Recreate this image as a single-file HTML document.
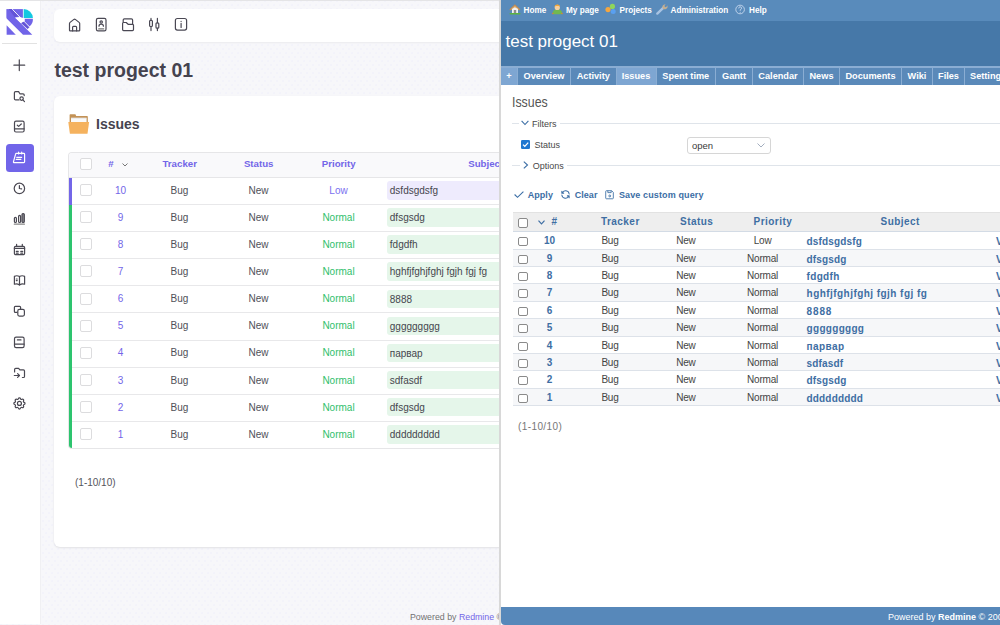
<!DOCTYPE html>
<html><head><meta charset="utf-8">
<style>
*{box-sizing:border-box;margin:0;padding:0}
html,body{width:1000px;height:625px;overflow:hidden;font-family:"Liberation Sans",sans-serif;background:#fff}
.ic{position:absolute;overflow:visible}
#L{position:absolute;left:0;top:0;width:499px;height:625px;background-color:#f7f7fa;background-image:radial-gradient(circle at 1px 1px,#f2f2fa 0.6px,transparent 1px),radial-gradient(circle at 4px 5px,#f2f2fa 0.6px,transparent 1px);background-size:6px 8px;overflow:hidden}
#sep{position:absolute;left:499px;top:0;width:2px;height:625px;background:#d8d8d8}
#R{position:absolute;left:501px;top:0;width:499px;height:625px;background:#fff;overflow:hidden}
/* left */
#topline{position:absolute;left:0;top:0;width:499px;height:1px;background:#e4e4e6}
#side{position:absolute;left:0;top:0;width:40px;height:624px;background:#fff;box-shadow:1px 0 0 #f0f0f3}
#side .sep{position:absolute;left:1.5px;top:43px;width:35.5px;height:1px;background:#e2e2e2}
#sideact{position:absolute;left:5.5px;top:144px;width:28px;height:28px;background:#7165e9;border-radius:3.5px}
#tb{position:absolute;left:54px;top:9px;width:470px;height:33px;background:#fff;border-radius:6px;box-shadow:0 1px 2px rgba(0,0,0,.05)}
#ltitle{position:absolute;left:54.4px;top:59px;font-size:19.5px;font-weight:bold;color:#45434f;white-space:nowrap}
#card{position:absolute;left:54px;top:96px;width:470px;height:451px;background:#fff;border-radius:6px;box-shadow:0 1px 2px rgba(0,0,0,.09)}
#lh2{position:absolute;left:96px;top:116px;font-size:14px;font-weight:bold;color:#45434f}
#ltab{position:absolute;left:68px;top:152px;width:460px;height:297px;border:1px solid #e6e6e8;border-right:none;border-radius:4px 0 0 4px;overflow:hidden;background:#fff}
#ltab .hr{position:absolute;left:0;top:0;right:0;height:24.5px;background:#f9f9fb;border-bottom:1px solid #e6e6e8}
#ltab .lr{position:absolute;left:-1px;right:0;height:27.1px;border-bottom:1px solid #e8e8ea}
#ltab .lr:last-child{border-bottom:none}
#ltab .bar{position:absolute;left:-1px;top:-0.5px;bottom:-1.5px;width:5.4px}
#ltab .cb{position:absolute;left:12px;top:6.2px;width:12px;height:12px;border:1px solid #dcdcde;border-radius:2px;background:#fff}
#ltab .hr .cb{left:11px;top:5px}
#ltab .c{position:absolute;top:6.9px;font-size:10px;line-height:12px;color:#505058;white-space:nowrap;transform:translateX(-50%);margin-left:0.5px}
#ltab .hr .c{top:5px;margin-left:-0.3px;font-weight:bold;color:#7366e8;font-size:9.7px}
#ltab .subj{position:absolute;left:318.5px;top:3.2px;width:200px;height:18.5px;border-radius:3px;font-size:10px;color:#46464e;padding-left:3.3px;line-height:19.6px;white-space:nowrap}
#lpag{position:absolute;left:75px;top:477px;font-size:10px;color:#55555c}
#lfoot{position:absolute;left:410px;top:612px;font-size:8.8px;color:#727272;white-space:nowrap}
#lfoot b{font-weight:normal;color:#7366e8}
/* right */
#rtop{position:absolute;left:0;top:0;width:499px;height:21px;background:#598bbb}
#rhead{position:absolute;left:0;top:21px;width:499px;height:46px;background:#4678a8}
#rtitle{position:absolute;left:4.5px;top:31.5px;font-size:17px;color:#fff;white-space:nowrap}
#rtabs{position:absolute;left:0;top:66px;width:499px;height:19px;background:#8aadd3}
.tab{position:absolute;top:1.5px;height:17.5px;background:#5a89b9;color:#fff;font-weight:bold;font-size:9.2px;line-height:17.8px;text-align:center;white-space:nowrap}
.tab.sel{background:#7ea6d2}
.mm{position:absolute;top:5.5px;font-size:8.2px;font-weight:bold;color:#fff;white-space:nowrap;line-height:10px}
#rh2{position:absolute;left:11.3px;top:93.5px;font-size:14.2px;color:#555;white-space:nowrap;transform:scaleX(0.87);transform-origin:0 0}
.leg{position:absolute;left:11px;height:1px;background:#dfe4ea;width:490px}
.legt{position:absolute;font-size:9px;color:#484848;background:#fff;white-space:nowrap;line-height:10px}
.rbtn{position:absolute;top:189.5px;font-size:9px;font-weight:bold;color:#3b6ea5;white-space:nowrap;letter-spacing:0.05px;line-height:10px}
#rtab{position:absolute;left:11.6px;top:212px;width:500px;height:194px}
#rtab .hd{position:absolute;left:0;top:0;right:0;height:20px;background:#eeeeee;border-top:1px solid #e2e2e2;border-bottom:1px solid #d3dbe5}
#rtab .hd .t{position:absolute;top:2.6px;font-size:10px;font-weight:bold;color:#3e6ea3;white-space:nowrap;letter-spacing:0.45px;line-height:12px}
#rtab .rr{position:absolute;left:0;right:0;border-bottom:1px solid #dde2e9;background:#fff}
#rtab .rr.odd{background:#f6f7f9}
.rcb{position:absolute;left:5.8px;top:5px;width:9.2px;height:9.2px;border:1px solid #8a8a8a;border-radius:2px;background:#fff}
.rid{position:absolute;left:25px;width:24px;text-align:center;top:2.9px;font-size:10px;font-weight:bold;color:#3e6ea3;line-height:11px}
.rc{position:absolute;top:2.6px;font-size:10px;letter-spacing:-0.2px;color:#444;white-space:nowrap;line-height:11px}
.rp{left:222px;width:56px;text-align:center}
.rs{position:absolute;left:294px;top:3.5px;font-size:10px;font-weight:bold;color:#3e6ea3;white-space:nowrap;line-height:11px;letter-spacing:0.15px}
.rv{position:absolute;left:483.4px;top:3.5px;font-size:10px;font-weight:bold;color:#3e6ea3;line-height:11px}
#rpag{position:absolute;left:17px;top:420.5px;font-size:10px;color:#777;white-space:nowrap;letter-spacing:0.4px}
#rfoot{position:absolute;left:0;top:607px;width:499px;height:18px;border-bottom-left-radius:4px;background:#5788ba;color:#fff;font-size:9px;line-height:18px;white-space:nowrap}
#rfoot span{position:absolute;left:387px;top:0.5px}
</style></head>
<body>
<div id="L">
  <div id="side">
    <svg class="ic" style="left:4px;top:6px;width:32px;height:32px" viewBox="0 0 32 32">
      <path d="M2.6 3.1H18.9V11.8H2.6Z" fill="#7164e8"/>
      <path d="M2.6 3.1L2.6 12.6L19 28.7H28.3L12 12.6Z" fill="#7164e8"/>
      <path d="M2.6 19.3V28.7H11.8Z" fill="#7164e8"/>
      <path d="M19.7 3.1A9.2 9.2 0 0 1 28.9 12.1H19.7Z" fill="#13c9e1"/>
      <path d="M20.5 12.8H28.9A9 9 0 0 1 25.3 20.6L20.5 16Z" fill="#7164e8"/>
      <path d="M4.6 3.1H8.2L14.8 9.6L11 11.5Z" fill="#6354d6"/>
      <path d="M16.9 16.9L20.5 14.9L25.6 21L23.6 23.1Z" fill="#6354d6"/>
      <path d="M11 11.6L15.9 11L20.5 12.8V14.9L16.9 16.9Z" fill="#fff"/>
      <path d="M8.2 3.1L25.6 21" stroke="#fff" stroke-width="0.9"/>
    </svg>
    <div class="sep"></div>
    <svg class="ic" style="left:0;top:0;width:40px;height:625px" viewBox="0 0 40 625" fill="none" stroke="#4a4852" stroke-width="1.2" stroke-linecap="round" stroke-linejoin="round">
<path d="M19.3 59.8V70.6M13.9 65.2H24.7"/>
<path d="M19 99.9H15.6Q14.4 99.9 14.4 98.7V92.8Q14.4 91.6 15.6 91.6H18.6L19.9 93.8H23Q24.2 93.8 24.2 95V95.6"/>
<circle cx="21.6" cy="98.6" r="1.7"/><path d="M22.9 99.9L24.5 101.6"/>
<rect x="14.5" y="121.2" width="9.6" height="10.8" rx="1.5"/><path d="M14.5 128.8H24.1"/><path d="M17.3 125.2L18.7 126.4L21.3 124"/>
<circle cx="19.4" cy="188.4" r="5.2"/><path d="M19.4 185.6V188.5L21.6 188.9"/>
<rect x="14.4" y="217.3" width="2" height="5.2" rx="1"/><rect x="18.6" y="215.4" width="2" height="7.1" rx="1"/><rect x="22" y="213.6" width="2.3" height="8.9" rx="1" fill="#8a8a90"/><path d="M14.3 224.2H24.4" stroke="#888"/>
<rect x="14.4" y="246.3" width="10.2" height="8.3" rx="1.2"/><path d="M16.6 244.3V246.3M22.3 244.3V246.3M14.4 248.4H24.6M16.3 251.4H18.2M20.8 251.4H22.7M16.3 253.2H18.2M20.8 253.2H22.7" />
<path d="M14.4 276.4Q17 275 19.5 276.6Q22 275 24.6 276.4V284.2Q22 283.2 19.5 285Q17 283.2 14.4 284.2Z"/><path d="M19.5 276.6V285M16.3 279H17.2M16.3 280.6H17.2"/>
<path d="M17 312.3H15.3Q14.4 312.3 14.4 311.4V307.2Q14.4 306.3 15.3 306.3H19.6Q20.6 306.3 20.6 307.2V309.2"/><rect x="17.8" y="309.4" width="6.6" height="6.7" rx="1.5"/>
<rect x="14.5" y="337.2" width="9.6" height="10.5" rx="1.6"/><path d="M14.5 344.2H24.1M17.4 339.9H21"/>
<path d="M14.6 372V369.4Q14.6 368.3 15.7 368.3H18.6L19.9 369.9H23.4Q24.5 369.9 24.5 371V376.4Q24.5 377.5 23.4 377.5H22.4"/><path d="M14.3 375.5H19.4M17.6 373.6L19.5 375.5L17.6 377.4"/>
<g transform="translate(19.43 403.45) scale(0.62) translate(-12 -12)" stroke-width="1.95"><path d="M10.325 4.317c.426-1.756 2.924-1.756 3.35 0a1.724 1.724 0 0 0 2.573 1.066c1.543-.94 3.31.826 2.37 2.37a1.724 1.724 0 0 0 1.065 2.572c1.756.426 1.756 2.924 0 3.35a1.724 1.724 0 0 0-1.066 2.573c.94 1.543-.826 3.31-2.37 2.37a1.724 1.724 0 0 0-2.572 1.065c-.426 1.756-2.924 1.756-3.35 0a1.724 1.724 0 0 0-2.573-1.066c-1.543.94-3.31-.826-2.37-2.37a1.724 1.724 0 0 0-1.065-2.572c-1.756-.426-1.756-2.924 0-3.35a1.724 1.724 0 0 0 1.066-2.573c-.94-1.543.826-3.31 2.37-2.37c1 .608 2.296.07 2.572-1.065z"/><circle cx="12" cy="12" r="3.2"/></g>
</svg>
    <div id="sideact"></div>
    <svg class="ic" style="left:0;top:0;width:40px;height:200px" viewBox="0 0 40 200" fill="none" stroke="#fff" stroke-width="1.2" stroke-linecap="round" stroke-linejoin="round">
<path d="M16.4 153.4H23.8Q24.6 153.4 24.6 154.2V161.8Q24.6 162.6 23.8 162.6H14.2Q13.2 162.6 13.5 161.6L15.6 154.2Q15.8 153.4 16.4 153.4Z"/>
<path d="M18.6 152.2V154M21.7 152.2V154M16.8 157.4H21.6M16.3 159.4H20.8"/>
</svg>
  </div>
  <div id="topline"></div>
  <div id="tb"></div>
  <svg class="ic" style="left:0;top:0;width:200px;height:40px" viewBox="0 0 200 40" fill="none" stroke="#4a4854" stroke-width="1.2" stroke-linecap="round" stroke-linejoin="round">
    <path d="M69.5 30.2V23.6Q69.5 22.9 70.1 22.4L73.9 19.4Q74.6 18.9 75.3 19.4L79.1 22.4Q79.7 22.9 79.7 23.6V30.2Q79.7 30.9 79 30.9H70.2Q69.5 30.9 69.5 30.2Z"/>
    <path d="M72.6 30.9V27.2Q72.6 26.3 73.5 26.3H75.7Q76.6 26.3 76.6 27.2V30.9"/>
    <rect x="96.4" y="18.4" width="9.6" height="12.4" rx="1.6"/>
    <circle cx="101.2" cy="22" r="1.2"/>
    <path d="M99 26.2Q99 24.2 101.2 24.2Q103.4 24.2 103.4 26.2"/>
    <path d="M98.8 28.9H103.6" stroke-width="1.4" stroke="#777"/>
    <path d="M123.2 22.2V20.1Q123.2 18.9 124.4 18.9H131.4Q132.6 18.9 132.6 20.1V24.2"/>
    <path d="M122.6 29.6V23.4Q122.6 22.5 123.5 22.5H126.2L128.1 24.3H132.6Q133.5 24.3 133.5 25.2V29.6Q133.5 30.6 132.5 30.6H123.6Q122.6 30.6 122.6 29.6Z"/>
    <path d="M151 18.4V20.2M151 26.6V30.6M157.4 18.4V22.7M157.4 28.3V30.6"/>
    <rect x="149.6" y="20.3" width="2.8" height="6.2" rx="1"/>
    <rect x="156" y="22.8" width="2.8" height="5.4" rx="1"/>
    <rect x="175.4" y="18.5" width="11.2" height="11.6" rx="2"/>
    <path d="M181.1 21.4V21.5M181.1 23.4V27.4"/>
  </svg>
  <div id="ltitle">test progect 01</div>
  <div id="card"></div>
  <svg class="ic" style="left:60px;top:110px;width:35px;height:30px" viewBox="60 110 35 30">
    <path d="M69.6 115Q69.6 114.3 70.3 114.3H75.4L76.2 116H87.1Q87.8 116 87.8 116.7V122.2H69.6Z" fill="#c39256"/>
    <rect x="71" y="117.8" width="15.6" height="4.4" fill="#fafafa"/>
    <path d="M71 118.2H86.6" stroke="#d8d8d8" stroke-width="0.6"/>
    <path d="M68.3 121.9H89.1L87.5 133.8H69.9Z" fill="#f5b25e"/>
  </svg>
  <div id="lh2">Issues</div>
  <div id="ltab">
    <div class="hr">
      <div class="cb"></div>
      <div class="c" style="left:42.3px">#</div>
      <svg class="ic" style="left:52.6px;top:9.8px;width:6px;height:4px" viewBox="0 0 6 4" fill="none" stroke="#666" stroke-width="0.9"><path d="M0.5 0.5L3 3L5.5 0.5"/></svg>
      <div class="c" style="left:111px">Tracker</div>
      <div class="c" style="left:190px">Status</div>
      <div class="c" style="left:270px">Priority</div>
      <div class="c" style="left:417px">Subject</div>
    </div>
    <div class="lr" style="top:25.00px"><div class="bar" style="background:#7366e8"></div><div class="cb"></div><div class="c" style="left:52px;color:#7366e8">10</div><div class="c" style="left:111px">Bug</div><div class="c" style="left:190px">New</div><div class="c" style="left:270px;color:#7a6ff0">Low</div><div class="subj" style="background:#eeebfd">dsfdsgdsfg</div></div><div class="lr" style="top:52.10px"><div class="bar" style="background:#2dc46e"></div><div class="cb"></div><div class="c" style="left:52px;color:#7366e8">9</div><div class="c" style="left:111px">Bug</div><div class="c" style="left:190px">New</div><div class="c" style="left:270px;color:#2fc06b">Normal</div><div class="subj" style="background:#e5f6ea">dfsgsdg</div></div><div class="lr" style="top:79.20px"><div class="bar" style="background:#2dc46e"></div><div class="cb"></div><div class="c" style="left:52px;color:#7366e8">8</div><div class="c" style="left:111px">Bug</div><div class="c" style="left:190px">New</div><div class="c" style="left:270px;color:#2fc06b">Normal</div><div class="subj" style="background:#e5f6ea">fdgdfh</div></div><div class="lr" style="top:106.30px"><div class="bar" style="background:#2dc46e"></div><div class="cb"></div><div class="c" style="left:52px;color:#7366e8">7</div><div class="c" style="left:111px">Bug</div><div class="c" style="left:190px">New</div><div class="c" style="left:270px;color:#2fc06b">Normal</div><div class="subj" style="background:#e5f6ea">hghfjfghjfghj fgjh fgj fg</div></div><div class="lr" style="top:133.40px"><div class="bar" style="background:#2dc46e"></div><div class="cb"></div><div class="c" style="left:52px;color:#7366e8">6</div><div class="c" style="left:111px">Bug</div><div class="c" style="left:190px">New</div><div class="c" style="left:270px;color:#2fc06b">Normal</div><div class="subj" style="background:#e5f6ea">8888</div></div><div class="lr" style="top:160.50px"><div class="bar" style="background:#2dc46e"></div><div class="cb"></div><div class="c" style="left:52px;color:#7366e8">5</div><div class="c" style="left:111px">Bug</div><div class="c" style="left:190px">New</div><div class="c" style="left:270px;color:#2fc06b">Normal</div><div class="subj" style="background:#e5f6ea">ggggggggg</div></div><div class="lr" style="top:187.60px"><div class="bar" style="background:#2dc46e"></div><div class="cb"></div><div class="c" style="left:52px;color:#7366e8">4</div><div class="c" style="left:111px">Bug</div><div class="c" style="left:190px">New</div><div class="c" style="left:270px;color:#2fc06b">Normal</div><div class="subj" style="background:#e5f6ea">парвар</div></div><div class="lr" style="top:214.70px"><div class="bar" style="background:#2dc46e"></div><div class="cb"></div><div class="c" style="left:52px;color:#7366e8">3</div><div class="c" style="left:111px">Bug</div><div class="c" style="left:190px">New</div><div class="c" style="left:270px;color:#2fc06b">Normal</div><div class="subj" style="background:#e5f6ea">sdfasdf</div></div><div class="lr" style="top:241.80px"><div class="bar" style="background:#2dc46e"></div><div class="cb"></div><div class="c" style="left:52px;color:#7366e8">2</div><div class="c" style="left:111px">Bug</div><div class="c" style="left:190px">New</div><div class="c" style="left:270px;color:#2fc06b">Normal</div><div class="subj" style="background:#e5f6ea">dfsgsdg</div></div><div class="lr" style="top:268.90px"><div class="bar" style="background:#2dc46e"></div><div class="cb"></div><div class="c" style="left:52px;color:#7366e8">1</div><div class="c" style="left:111px">Bug</div><div class="c" style="left:190px">New</div><div class="c" style="left:270px;color:#2fc06b">Normal</div><div class="subj" style="background:#e5f6ea">ddddddddd</div></div>
  </div>
  <div id="lpag">(1-10/10)</div>
  <div id="lfoot">Powered by <b>Redmine</b> ©</div>
</div>
<div id="sep"></div>
<div id="R">
  <div id="rtop"></div>
  <svg class="ic" style="left:0;top:0;width:260px;height:21px" viewBox="501 0 260 21">
    <path d="M509.3 9.6L514.9 4.3L520.5 9.6L519.3 10.6L514.9 6.6L510.5 10.6Z" fill="#c08a52"/>
    <path d="M510.5 9.4L514.9 5.4L519.3 9.4Z" fill="#d9a86c"/>
    <path d="M512 9L514.9 7.2L518 9V14H512Z" fill="#f2f2f2"/>
    <rect x="513.8" y="10" width="2.4" height="4" fill="#8c8c8c"/>
    <rect x="509.5" y="12.9" width="11" height="1.6" rx="0.8" fill="#5cb33f"/>
    <path d="M552.6 14.2Q552.4 9.2 557.4 9Q562.4 9.2 562.3 14.2Z" fill="#72b850"/>
    <circle cx="557.3" cy="7.4" r="2.6" fill="#f5d0a0"/>
    <path d="M554.6 7Q554.6 4.4 557.3 4.4Q560 4.4 560 7L558.8 6H555.8Z" fill="#f2a433"/>
    <circle cx="552.8" cy="13.5" r="0.8" fill="#e07c3a"/><circle cx="562" cy="13.5" r="0.8" fill="#e07c3a"/>
    <circle cx="612.4" cy="6.4" r="2.6" fill="#8fd65c"/>
    <circle cx="613.2" cy="11.6" r="2.5" fill="#5aa0f0"/>
    <circle cx="608" cy="9.6" r="2.6" fill="#f4a640"/>
    <path d="M657.3 13.6L663.5 7.6" stroke="#a9c3e2" stroke-width="2.4" stroke-linecap="round"/>
    <path d="M662.6 8.2Q661.8 5 664.4 4.4L665.6 4.3L664.4 6L665.2 7.2L666.8 6.6L667.2 5.2Q668.4 7.6 666 9Q664.6 9.6 663.6 9.2Z" fill="#c4ae90"/>
    <circle cx="740.1" cy="9.5" r="4.3" fill="none" stroke="#c6d8ee" stroke-width="0.9"/>
    <path d="M738.7 8.4Q738.7 6.8 740.1 6.8Q741.6 6.8 741.6 8.2Q741.6 9.2 740.2 9.8V10.8" fill="none" stroke="#c6d8ee" stroke-width="0.9"/>
    <circle cx="740.2" cy="12.2" r="0.5" fill="#c6d8ee"/>
  </svg>
  <div class="mm" style="left:22.5px">Home</div>
  <div class="mm" style="left:65px">My page</div>
  <div class="mm" style="left:118.5px">Projects</div>
  <div class="mm" style="left:169.5px">Administration</div>
  <div class="mm" style="left:248px">Help</div>
  <div id="rhead"></div>
  <div id="rtitle">test progect 01</div>
  <div id="rtabs"><div class="tab sel" style="left:0px;width:16px">+</div><div class="tab" style="left:17px;width:52px">Overview</div><div class="tab" style="left:70px;width:44.5px">Activity</div><div class="tab sel" style="left:115.5px;width:39.0px">Issues</div><div class="tab" style="left:155.5px;width:58.5px">Spent time</div><div class="tab" style="left:215px;width:36px">Gantt</div><div class="tab" style="left:252px;width:50px">Calendar</div><div class="tab" style="left:303px;width:35px">News</div><div class="tab" style="left:339px;width:61px">Documents</div><div class="tab" style="left:401px;width:30px">Wiki</div><div class="tab" style="left:432px;width:31px">Files</div><div class="tab" style="left:464px;width:76px;text-align:left;padding-left:5px">Settings</div></div>
  <div id="rh2">Issues</div>
  <div class="leg" style="top:123px"></div>
  <div class="legt" style="left:18px;top:118.8px;padding:0 3px 0 2px">
    <svg style="display:inline-block;width:8px;height:6px;vertical-align:1px;margin-right:3px" viewBox="0 0 8 6" fill="none" stroke="#3b6ea5" stroke-width="1.1"><path d="M0.6 0.8L4 4.5L7.4 0.8"/></svg>Filters</div>
  <svg class="ic" style="left:20px;top:140px;width:9px;height:9px" viewBox="0 0 9 9">
    <rect x="0" y="0" width="9" height="9" rx="1.3" fill="#1f77d0"/>
    <path d="M2 4.6L3.8 6.4L7.2 2.6" fill="none" stroke="#fff" stroke-width="1.3"/>
  </svg>
  <div class="legt" style="left:33.5px;top:140px">Status</div>
  <div style="position:absolute;left:185.5px;top:136.6px;width:84px;height:17px;border:1px solid #d6d6d6;border-radius:3px;background:#fff"></div>
  <div class="legt" style="left:191px;top:141px;font-size:9.5px;color:#3a3a3a;background:none">open</div>
  <svg class="ic" style="left:255.6px;top:142.5px;width:8px;height:5px" viewBox="0 0 8 5" fill="none" stroke="#a3aebf" stroke-width="1"><path d="M0.5 0.5L4 4L7.5 0.5"/></svg>
  <div class="leg" style="top:165px"></div>
  <div class="legt" style="left:18.8px;top:160.8px;padding:0 3px 0 3px">
    <svg style="display:inline-block;width:6px;height:8px;vertical-align:0px;margin-right:4px" viewBox="0 0 6 8" fill="none" stroke="#3b6ea5" stroke-width="1.1"><path d="M0.8 0.6L4.5 4L0.8 7.4"/></svg>Options</div>
  <svg class="ic" style="left:12.5px;top:190.5px;width:10px;height:7px" viewBox="0 0 10 7" fill="none" stroke="#3b6ea5" stroke-width="1.1"><path d="M0.6 3.5L3.5 6.3L9.4 0.6"/></svg>
  <div class="rbtn" style="left:26.7px">Apply</div>
  <svg class="ic" style="left:59px;top:188.5px;width:11px;height:11px" viewBox="0 0 24 24" fill="none" stroke="#3b6ea5" stroke-width="2.2" stroke-linecap="round" stroke-linejoin="round"><path d="M20 11A8.1 8.1 0 0 0 4.5 9M4 5v4h4"/><path d="M4 13a8.1 8.1 0 0 0 15.5 2m.5 4v-4h-4"/></svg>
  <div class="rbtn" style="left:73.7px">Clear</div>
  <svg class="ic" style="left:104.2px;top:189.5px;width:9.5px;height:9.5px" viewBox="0 0 20 20" fill="none" stroke="#3b6ea5" stroke-width="1.8" stroke-linejoin="round"><path d="M1.5 3a1.5 1.5 0 0 1 1.5-1.5h11l3.5 3.5v12a1.5 1.5 0 0 1-1.5 1.5H3a1.5 1.5 0 0 1-1.5-1.5z"/><path d="M6 1.5v4h7v-4"/><circle cx="10" cy="12.5" r="2"/></svg>
  <div class="rbtn" style="left:118px;letter-spacing:0.12px">Save custom query</div>
  <div id="rtab">
    <div class="hd">
      <div class="rcb" style="top:5.4px"></div>
      <svg class="ic" style="left:25.5px;top:7px;width:7px;height:5px" viewBox="0 0 7 5" fill="none" stroke="#3e6ea3" stroke-width="1.2"><path d="M0.5 0.7L3.5 3.8L6.5 0.7"/></svg>
      <div class="t" style="left:39px">#</div>
      <div class="t" style="left:88.4px">Tracker</div>
      <div class="t" style="left:167.5px">Status</div>
      <div class="t" style="left:241px">Priority</div>
      <div class="t" style="left:368px">Subject</div>
    </div>
    <div class="rr" style="top:20px;height:18px"><div class="rcb"></div><div class="rid">10</div><div class="rc" style="left:88.79999999999995px">Bug</div><div class="rc" style="left:163.60000000000002px">New</div><div class="rc rp">Low</div><div class="rs" style="letter-spacing:0.15px">dsfdsgdsfg</div><div class="rv">V</div></div><div class="rr odd" style="top:38px;height:17px"><div class="rcb"></div><div class="rid">9</div><div class="rc" style="left:88.79999999999995px">Bug</div><div class="rc" style="left:163.60000000000002px">New</div><div class="rc rp">Normal</div><div class="rs" style="letter-spacing:0.15px">dfsgsdg</div><div class="rv">V</div></div><div class="rr" style="top:55px;height:17px"><div class="rcb"></div><div class="rid">8</div><div class="rc" style="left:88.79999999999995px">Bug</div><div class="rc" style="left:163.60000000000002px">New</div><div class="rc rp">Normal</div><div class="rs" style="letter-spacing:0.32px">fdgdfh</div><div class="rv">V</div></div><div class="rr odd" style="top:72px;height:18px"><div class="rcb"></div><div class="rid">7</div><div class="rc" style="left:88.79999999999995px">Bug</div><div class="rc" style="left:163.60000000000002px">New</div><div class="rc rp">Normal</div><div class="rs" style="letter-spacing:0.45px">hghfjfghjfghj fgjh fgj fg</div><div class="rv">V</div></div><div class="rr" style="top:90px;height:17px"><div class="rcb"></div><div class="rid">6</div><div class="rc" style="left:88.79999999999995px">Bug</div><div class="rc" style="left:163.60000000000002px">New</div><div class="rc rp">Normal</div><div class="rs" style="letter-spacing:0.85px">8888</div><div class="rv">V</div></div><div class="rr odd" style="top:107px;height:18px"><div class="rcb"></div><div class="rid">5</div><div class="rc" style="left:88.79999999999995px">Bug</div><div class="rc" style="left:163.60000000000002px">New</div><div class="rc rp">Normal</div><div class="rs" style="letter-spacing:0.3px">ggggggggg</div><div class="rv">V</div></div><div class="rr" style="top:125px;height:17px"><div class="rcb"></div><div class="rid">4</div><div class="rc" style="left:88.79999999999995px">Bug</div><div class="rc" style="left:163.60000000000002px">New</div><div class="rc rp">Normal</div><div class="rs" style="letter-spacing:0.42px">парвар</div><div class="rv">V</div></div><div class="rr odd" style="top:142px;height:17px"><div class="rcb"></div><div class="rid">3</div><div class="rc" style="left:88.79999999999995px">Bug</div><div class="rc" style="left:163.60000000000002px">New</div><div class="rc rp">Normal</div><div class="rs" style="letter-spacing:0.15px">sdfasdf</div><div class="rv">V</div></div><div class="rr" style="top:159px;height:18px"><div class="rcb"></div><div class="rid">2</div><div class="rc" style="left:88.79999999999995px">Bug</div><div class="rc" style="left:163.60000000000002px">New</div><div class="rc rp">Normal</div><div class="rs" style="letter-spacing:0.15px">dfsgsdg</div><div class="rv">V</div></div><div class="rr odd" style="top:177px;height:17px"><div class="rcb"></div><div class="rid">1</div><div class="rc" style="left:88.79999999999995px">Bug</div><div class="rc" style="left:163.60000000000002px">New</div><div class="rc rp">Normal</div><div class="rs" style="letter-spacing:0.15px">ddddddddd</div><div class="rv">V</div></div>
  </div>
  <div id="rpag">(1-10/10)</div>
  <div id="rfoot"><span>Powered by <b>Redmine</b> © 2006-2023 Jean-Philippe Lang</span></div>
</div>
</body></html>
